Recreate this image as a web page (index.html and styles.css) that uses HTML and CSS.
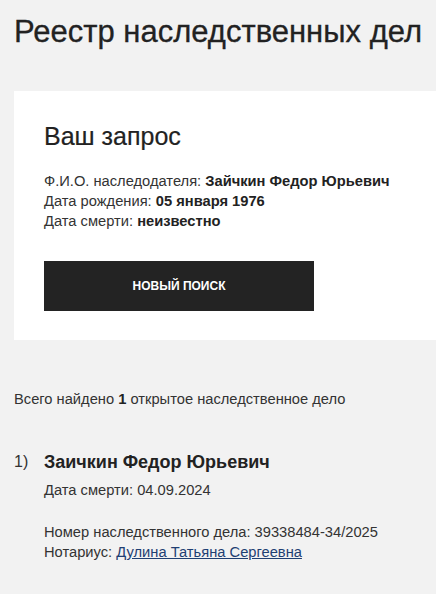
FILE: index.html
```html
<!DOCTYPE html>
<html lang="ru">
<head>
<meta charset="utf-8">
<link rel="stylesheet" href="styles.css">
</head>
<body>
<div class="page">
  <h1 class="title">Реестр наследственных дел</h1>
  <section class="card">
    <h2 class="card-title">Ваш запрос</h2>
    <div class="query">
      <div>Ф.И.О. наследодателя: <b>Зайчкин Федор Юрьевич</b></div>
      <div>Дата рождения: <b>05 января 1976</b></div>
      <div>Дата смерти: <b>неизвестно</b></div>
    </div>
    <button class="btn">Новый поиск</button>
  </section>
  <p class="summary">Всего найдено <b>1</b> открытое наследственное дело</p>
  <ol class="results">
    <li class="result">
      <span class="num">1)</span>
      <div class="body">
        <div class="name">Заичкин Федор Юрьевич</div>
        <div class="death">Дата смерти: 04.09.2024</div>
        <div class="meta">
          <div>Номер наследственного дела: 39338484-34/2025</div>
          <div>Нотариус: <a class="link" href="#">Дулина Татьяна Сергеевна</a></div>
        </div>
      </div>
    </li>
  </ol>
</div>
</body>
</html>
```
FILE: styles.css
```css
html, body {
  margin: 0;
  padding: 0;
  background: #f2f2f2;
}
body {
  font-family: "Liberation Sans", Arial, sans-serif;
  color: #333;
}
b { color: #222; }
.page {
  padding: 14px 0 0 14px;
}
.title {
  margin: 0;
  font-size: 31px;
  font-weight: normal;
  line-height: 36px;
  color: #222;
  -webkit-text-stroke: 0.3px #222;
}
.card {
  margin-top: 41px;
  background: #fff;
  padding: 30px 30px 29px 30px;
}
.card-title {
  margin: 0;
  font-size: 25px;
  font-weight: normal;
  line-height: 30px;
  color: #222;
  -webkit-text-stroke: 0.2px #222;
}
.query {
  margin-top: 20px;
  font-size: 14.7px;
  line-height: 20px;
}
.btn {
  display: block;
  margin-top: 30px;
  width: 270px;
  height: 50px;
  border: 0;
  background: #232323;
  color: #fff;
  font-family: "Liberation Sans", Arial, sans-serif;
  font-weight: bold;
  font-size: 12px;
  text-transform: uppercase;
}
.summary {
  margin: 49px 0 0 0;
  font-size: 14.7px;
  line-height: 20px;
}
.results {
  list-style: none;
  margin: 41px 0 0 0;
  padding: 0;
}
.result {
  display: flex;
}
.num {
  width: 30px;
  font-size: 16px;
  line-height: 24px;
}
.name {
  font-size: 18px;
  font-weight: bold;
  line-height: 24px;
  color: #222;
}
.death {
  margin-top: 6px;
  font-size: 14.7px;
  line-height: 20px;
}
.meta {
  margin-top: 22px;
  font-size: 14.7px;
  line-height: 20px;
}
.link {
  color: #1f3f73;
  text-decoration: underline;
}
```
